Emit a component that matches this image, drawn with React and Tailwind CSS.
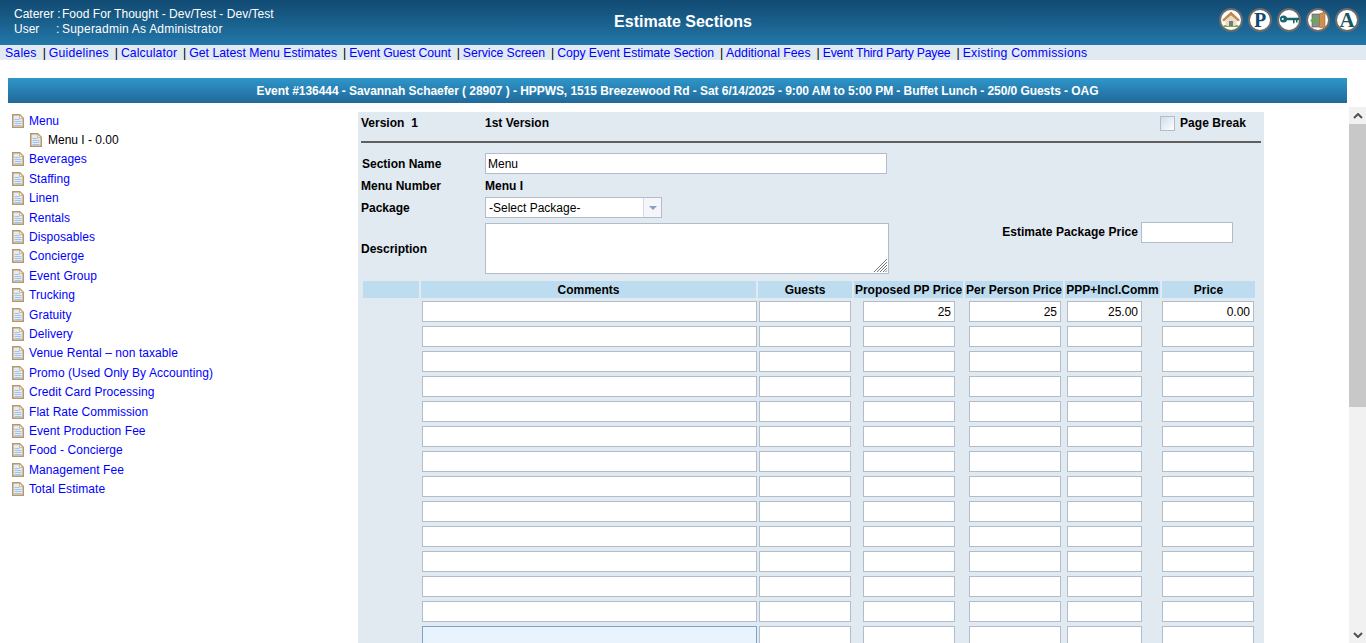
import React from 'react';

// tracking per link, the screenshot's hinted text runs a little uneven
const navLinks = [
  { label: 'Sales', cls: 'tracking-[0.2px]' },
  { label: 'Guidelines', cls: 'tracking-[0.2px]' },
  { label: 'Calculator', cls: 'tracking-[0.1px]' },
  { label: 'Get Latest Menu Estimates', cls: '' },
  { label: 'Event Guest Count', cls: 'tracking-[-0.12px]' },
  { label: 'Service Screen', cls: 'tracking-[-0.07px]' },
  { label: 'Copy Event Estimate Section', cls: 'tracking-[-0.07px]' },
  { label: 'Additional Fees', cls: '' },
  { label: 'Event Third Party Payee', cls: 'tracking-[-0.21px]' },
  { label: 'Existing Commissions', cls: 'tracking-[0.25px]' },
];

const sections = [
  'Beverages',
  'Staffing',
  'Linen',
  'Rentals',
  'Disposables',
  'Concierge',
  'Event Group',
  'Trucking',
  'Gratuity',
  'Delivery',
  'Venue Rental – non taxable',
  'Promo (Used Only By Accounting)',
  'Credit Card Processing',
  'Flat Rate Commission',
  'Event Production Fee',
  'Food - Concierge',
  'Management Fee',
  'Total Estimate',
];

const inputBase = 'block h-[21px] border px-[3px] text-xs text-black outline-none';
const inputCls = `${inputBase} border-[#b3bccb] bg-white`;

function DocIcon() {
  return (
    <svg width="12" height="14" viewBox="0 0 12 14" className="shrink-0">
      <path d="M.75.75h7l3.500 3.500v9H.75z" fill="#e4ebf4" stroke="#b8986a" strokeWidth="1.500" />
      <path d="M7.500 1v3.500H11z" fill="#fbf3dc" stroke="#c4a878" strokeWidth=".7" />
      <path d="M2.500 5.500h5M2.500 7.500h7M2.500 9.500h7M2.500 11.500h7" stroke="#a6c2e2" />
    </svg>
  );
}

function RoundIcon({ children }) {
  return (
    <div className="flex h-6 w-6 items-center justify-center rounded-full border-2 border-[#6b6b6b] bg-white">
      {children}
    </div>
  );
}

function Header() {
  return (
    <header className="flex h-[45px] items-start bg-gradient-to-b from-[#114a72] to-[#2377a9] text-white">
      <div className="w-[420px] pl-[14px] pt-[7px] text-xs leading-[15px]">
        <div className="flex">
          <span className="w-[48px]">Caterer :</span>
          <span className="tracking-[0.03px]">Food For Thought - Dev/Test - Dev/Test</span>
        </div>
        <div className="flex">
          <span className="w-[48px]">User&nbsp;&nbsp;&nbsp;&nbsp;&nbsp;:</span>
          <span className="tracking-[0.22px]">Superadmin As Administrator</span>
        </div>
      </div>
      <div className="flex-1 pt-[13px] text-center text-base leading-[18px] font-bold">Estimate Sections</div>
      <div className="flex w-[420px] justify-end gap-[5px] pt-[8px] pr-[7px]">
        <RoundIcon>
          <svg width="20" height="20" viewBox="0 0 20 20">
            <path d="M1.500 10L10 2l8.500 8-1.500 1L10 5 3 11z" fill="#c98a45" stroke="#9c6a33" strokeWidth=".6" />
            <path d="M4.500 10.500L10 5.500l5.500 5V16h-11z" fill="#e9dcc3" />
            <rect x="8" y="11" width="4" height="5.500" fill="#7a7a7a" />
            <path d="M2 17c1-2.500 3-2.500 4-1h8c1-1.500 3-1.500 4 1z" fill="#6fae4d" />
          </svg>
        </RoundIcon>
        <RoundIcon>
          <span className="font-['Liberation_Serif',serif] text-[20px] leading-none font-bold text-[#114a72]">P</span>
        </RoundIcon>
        <RoundIcon>
          <svg width="20" height="14" viewBox="0 0 20 14">
            <circle cx="4.500" cy="6" r="3.600" fill="#17656f" />
            <circle cx="3.700" cy="6" r="1.100" fill="#fff" />
            <path d="M7.500 4.800H20v2.400h-1.500v2.300H17V7.200h-1.400v3H14v-3H7.500z" fill="#17656f" />
          </svg>
        </RoundIcon>
        <RoundIcon>
          <svg width="20" height="20" viewBox="0 0 20 20">
            <rect x="4" y="4" width="10" height="13" fill="#8a8f8a" stroke="#555" strokeWidth=".6" />
            <path d="M11.500 4L17 1.500v17l-5.500-1.500z" fill="#cf8f4e" stroke="#9c6a33" strokeWidth=".6" />
            <path d="M2 10.500L6.500 7v2.300h4.500v2.400H6.500V14z" fill="#5cb24a" />
          </svg>
        </RoundIcon>
        <RoundIcon>
          <span className="font-['Liberation_Serif',serif] text-[21px] leading-none font-bold text-[#17565f]">A</span>
        </RoundIcon>
      </div>
    </header>
  );
}

function Sidebar() {
  return (
    <aside className="w-[358px] shrink-0 pt-[6px] pl-[12px] text-xs">
      <div className="flex h-[19.400px] items-center gap-[5px]">
        <DocIcon />
        <a className="text-[#0000ff]">Menu</a>
      </div>
      <div className="flex h-[19.400px] items-center gap-[6px] pl-[18px] text-black">
        <DocIcon />
        <span>Menu I - 0.00</span>
      </div>
      {sections.map((s) => (
        <div key={s} className="flex h-[19.400px] items-center gap-[5px]">
          <DocIcon />
          <a className="tracking-[0.06px] text-[#0000ff]">{s}</a>
        </div>
      ))}
    </aside>
  );
}

function EstimateRow({ values = [], focused }) {
  return (
    <>
      <div />
      <input
        readOnly
        className={`${focused ? `${inputBase} border-[#7ba3d0] bg-[#e8f3fd]` : inputCls} ml-px w-[335px]`}
      />
      <input readOnly className={`${inputCls} ml-px w-[92px]`} />
      <input readOnly value={values[0] || ''} className={`${inputCls} ml-[9px] w-[92px] text-right`} />
      <input readOnly value={values[1] || ''} className={`${inputCls} ml-[4px] w-[92px] text-right`} />
      <input readOnly value={values[2] || ''} className={`${inputCls} ml-[2px] w-[75px] text-right`} />
      <input readOnly value={values[3] || ''} className={`${inputCls} w-[92px] text-right`} />
    </>
  );
}

function EstimateForm() {
  const heads = ['', 'Comments', 'Guests', 'Proposed PP Price', 'Per Person Price', 'PPP+Incl.Comm', 'Price'];
  const rows = Array.from({ length: 14 }, (_, i) => i);

  return (
    <section className="mt-[7px] w-[906px] shrink-0 bg-[#e1e9f1] text-xs text-black">
      {/* version line */}
      <div className="flex h-[29px] items-start px-[3px] pt-[3px] font-bold">
        <span className="w-[124px] leading-[16px]">
          Version<span className="ml-[7px]">1</span>
        </span>
        <span className="flex-1 leading-[16px]">1st Version</span>
        <span className="mr-[15px] flex items-center gap-[5px]">
          <span className="h-[15px] w-[15px] border border-[#b3bccb] bg-gradient-to-br from-[#d0dcea] to-white" />
          <span className="w-[66px] leading-[16px] tracking-[0.05px]">Page Break</span>
        </span>
      </div>
      <div className="mx-[3px] h-[2px] bg-[#5f5f5f]" />

      {/* section fields */}
      <div className="mt-[10px] flex items-center pl-[4px] font-bold">
        <span className="w-[123px]">Section Name</span>
        <input readOnly value="Menu" className={`${inputCls} w-[402px] pl-[2px] font-normal`} />
      </div>
      <div className="mt-[2px] flex h-[19px] items-center pl-[3px] font-bold">
        <span className="w-[124px]">Menu Number</span>
        <span>Menu I</span>
      </div>
      <div className="mt-[2px] flex items-center pl-[3px] font-bold">
        <span className="w-[124px]">Package</span>
        <div className="flex h-[21px] w-[177px] border border-[#b3bccb] bg-white font-normal">
          <span className="flex-1 pl-[3px] leading-[21px]">-Select Package-</span>
          <span className="flex w-[18px] items-center justify-center border-l border-[#d5dbe3] bg-[#f4f6f9]">
            <span className="h-0 w-0 border-x-[4px] border-t-[4px] border-x-transparent border-t-[#8aa0c0]" />
          </span>
        </div>
      </div>
      <div className="mt-[5px] flex pl-[3px]">
        <span className="w-[124px] self-center font-bold">Description</span>
        <div className="relative h-[51px] w-[404px] border border-[#b3bccb] bg-white">
          <svg width="15" height="15" viewBox="0 0 15 15" className="absolute right-0 bottom-0">
            <path d="M14 1L1 14M14 4L4 14M14 7L7 14M14 10L10 14M14 12.500L12.500 14" stroke="#777" fill="none" />
          </svg>
        </div>
        <div className="ml-[112px] flex h-[21px] -translate-y-px items-center font-bold">
          <span className="mr-[3px] w-[137px] pb-[2px] text-right tracking-[0.05px]">Estimate Package Price</span>
          <input readOnly className={`${inputCls} w-[92px]`} />
        </div>
      </div>

      {/* price table */}
      <div className="mt-[7px] ml-[5px] grid grid-cols-[56px_335px_94px_109px_98px_95px_93px] gap-x-[2px] gap-y-[4px]">
        {heads.map((h, i) => (
          <div key={i} className="-mb-px h-[17px] bg-[#bddcef] text-center leading-[19px] font-bold whitespace-nowrap">
            {h}
          </div>
        ))}
        {rows.map((i) => (
          <EstimateRow
            key={i}
            values={i === 0 ? ['25', '25', '25.00', '0.00'] : []}
            focused={i === 13}
          />
        ))}
      </div>
    </section>
  );
}

function Scrollbar() {
  return (
    <div className="ml-auto mt-[2px] flex w-[17px] shrink-0 flex-col bg-[#f1f1f1]">
      <div className="flex h-[17px] items-center justify-center">
        <svg width="10" height="6" viewBox="0 0 10 6">
          <path d="M1 5l4-4 4 4" fill="none" stroke="#505050" strokeWidth="2" />
        </svg>
      </div>
      <div className="h-[283px] bg-[#c8c8c8]" />
      <div className="flex-1" />
      <div className="flex h-[17px] items-center justify-center">
        <svg width="10" height="6" viewBox="0 0 10 6">
          <path d="M1 1l4 4 4-4" fill="none" stroke="#505050" strokeWidth="2" />
        </svg>
      </div>
    </div>
  );
}

export default function App() {
  return (
    <div className="flex h-[643px] flex-col overflow-hidden bg-white font-['Liberation_Sans',Arial,sans-serif]">
      <Header />
      <nav className="flex h-[15px] items-center bg-[#e1e9f1] pt-[2px] pl-[5px] text-[12.250px] leading-[15px] whitespace-nowrap">
        {navLinks.map((l, i) => (
          <React.Fragment key={l.label}>
            {i > 0 && <span className="mr-[3px] ml-[6px] text-black">|</span>}
            <a className={`text-[#0000ff] ${l.cls}`}>{l.label}</a>
          </React.Fragment>
        ))}
      </nav>
      <div className="mx-[8px] mt-[18px] mr-[19px] h-[25px] bg-gradient-to-b from-[#2f96ca] to-[#21699a] text-center text-xs leading-[26px] font-bold tracking-[-0.055px] text-white">
        Event #136444 - Savannah Schaefer ( 28907 ) - HPPWS, 1515 Breezewood Rd - Sat 6/14/2025 - 9:00 AM to 5:00 PM - Buffet Lunch - 250/0 Guests - OAG
      </div>
      <div className="mt-[2px] flex min-h-0 flex-1">
        <Sidebar />
        <div className="min-h-0">
          <EstimateForm />
        </div>
        <Scrollbar />
      </div>
    </div>
  );
}
